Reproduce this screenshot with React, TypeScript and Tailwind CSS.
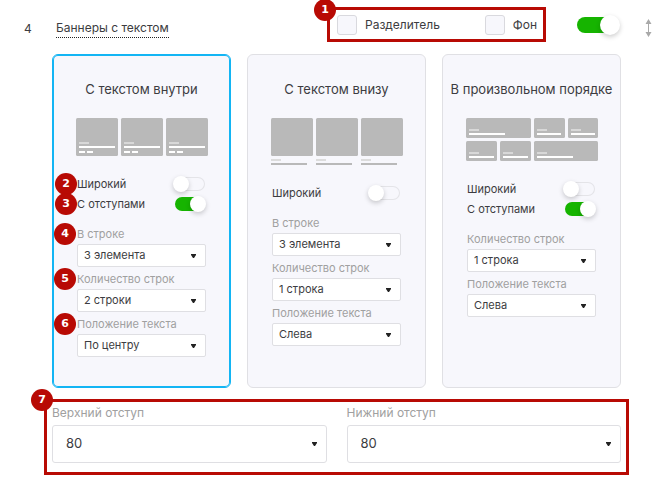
import { useId, type ReactNode } from "react";

function Badge({ n, className }: { n: number; className: string }) {
  return (
    <span
      className={`absolute z-10 flex size-[22px] items-center justify-center rounded-full bg-[#b80a04] font-['DejaVu_Sans',sans-serif] text-[11px] font-bold text-white ${className}`}
    >
      {n}
    </span>
  );
}

function CheckField({ label }: { label: string }) {
  return (
    <label className="flex items-center gap-2 text-[12px] leading-5">
      <input
        type="checkbox"
        className="size-5 appearance-none rounded-[3px] border border-[#d9d9de] bg-[#f7f7fc] checked:bg-[#16b400]"
      />
      {label}
    </label>
  );
}

function ToggleRow({ label, on, badge }: { label: string; on?: boolean; badge?: number }) {
  return (
    <label className="relative flex h-5 items-center justify-between text-[11px] whitespace-nowrap">
      {badge && <Badge n={badge} className="-left-[22px]" />}
      {label}
      <input
        type="checkbox"
        role="switch"
        defaultChecked={on}
        className="relative mr-px h-[14px] w-[30px] shrink-0 appearance-none rounded-full ring-1 ring-[#e4e4e8] ring-inset before:absolute before:-top-px before:-left-0.5 before:size-4 before:rounded-full before:bg-white before:shadow-[0_2px_5px_rgba(0,0,0,0.2)] checked:bg-[#16b400] checked:ring-0 checked:before:left-[15px]"
      />
    </label>
  );
}

function Arrow({ className }: { className: string }) {
  return (
    <svg
      viewBox="0 0 5 4"
      className={`pointer-events-none absolute h-1 w-[5px] fill-[#222] ${className}`}
      aria-hidden="true"
    >
      <path d="M0 0h5v1L3 4H2L0 1z" />
    </svg>
  );
}

function Field({ label, value, badge }: { label: string; value: string; badge?: number }) {
  const id = useId();
  return (
    <div>
      <div className="relative flex h-5 items-center">
        {badge && <Badge n={badge} className="-left-[23px]" />}
        <label htmlFor={id} className="text-[11px] whitespace-nowrap text-[#a0a0a0]">
          {label}
        </label>
      </div>
      <div className="relative">
        <select
          id={id}
          className="block h-[23px] w-full appearance-none rounded-[2px] border border-[#dfdfe3] bg-white pr-5 pl-1.5 text-[11px]"
        >
          <option>{value}</option>
        </select>
        <Arrow className="top-[10px] right-[10px]" />
      </div>
    </div>
  );
}

function OffsetField({ label }: { label: string }) {
  const id = useId();
  return (
    <div className="flex-1">
      <label htmlFor={id} className="block text-[12px] leading-5 text-[#a0a0a0]">
        {label}
      </label>
      <div className="relative mt-0.5">
        <select
          id={id}
          className="block h-[38px] w-full appearance-none rounded-[3px] border border-[#dfdfe3] bg-white px-[13px] text-[13px]"
        >
          <option>80</option>
        </select>
        <Arrow className="top-[17px] right-[10px]" />
      </div>
    </div>
  );
}

function InsideArt() {
  return (
    <svg width="132" height="38" aria-hidden="true">
      {[0, 45, 90].map((x) => (
        <g key={x}>
          <rect x={x} width="42" height="38" rx="1.5" fill="#b9b9b9" />
          <rect x={x + 3} y="24" width="10" height="2" fill="#d8d8d8" />
          <rect x={x + 3} y="28" width="36" height="2" fill="#fff" />
          <rect x={x + 3} y="33" width="6" height="2" fill="#fff" />
          <rect x={x + 11} y="33" width="6" height="2" fill="#fff" />
        </g>
      ))}
    </svg>
  );
}

function BelowArt() {
  return (
    <svg width="132" height="47" aria-hidden="true">
      {[0, 45, 90].map((x) => (
        <g key={x}>
          <rect x={x} width="42" height="38" rx="1.5" fill="#b9b9b9" />
          <rect x={x} y="41" width="10" height="2" fill="#dcdcdc" />
          <rect x={x} y="45" width="36" height="2" fill="#b9b9b9" />
        </g>
      ))}
    </svg>
  );
}

const mosaic = [
  { x: 0, y: 0, w: 65, line: 36 },
  { x: 68, y: 0, w: 31, line: 24 },
  { x: 102, y: 0, w: 30, line: 24 },
  { x: 0, y: 23, w: 31, line: 25 },
  { x: 34, y: 23, w: 31, line: 25 },
  { x: 68, y: 23, w: 64, line: 36 },
];

function MosaicArt() {
  return (
    <svg width="132" height="43" aria-hidden="true">
      {mosaic.map(({ x, y, w, line }) => (
        <g key={`${x}-${y}`}>
          <rect x={x} y={y} width={w} height="20" rx="1.5" fill="#b9b9b9" />
          <rect x={x + 3} y={y + 11} width="10" height="2" fill="#d8d8d8" />
          <rect x={x + 3} y={y + 15} width={line} height="2" fill="#fff" />
        </g>
      ))}
    </svg>
  );
}

function Card({
  title,
  art,
  toggles,
  fields,
  active,
}: {
  title: string;
  art: ReactNode;
  toggles: ReactNode;
  fields: ReactNode;
  active?: boolean;
}) {
  return (
    <section
      className={`min-w-0 rounded-md border bg-[#f7f7fc] pt-6 pb-[30px] ${
        active ? "border-[#13b5f4] ring-1 ring-[#13b5f4] ring-inset" : "border-[#e0e0e4]"
      }`}
    >
      <h3 className="text-center text-[13px] leading-5 whitespace-nowrap">{title}</h3>
      <div className="mt-[19px] flex justify-center">{art}</div>
      <div className="mt-[18px] px-6">{toggles}</div>
      <div className="mt-[10px] flex flex-col gap-0.5 px-6">{fields}</div>
    </section>
  );
}

export default function App() {
  return (
    <main className="bg-white font-[Inter,'Noto_Sans',sans-serif] text-[#3c3c41]">
      <header className="flex items-start pt-[7px] pr-4 pl-6">
        <span className="mt-3 w-8 text-[12px] leading-5">4</span>
        <button
          type="button"
          className="mt-3 border-b border-dotted border-[#222] text-[12px] leading-[18px]"
        >
          Баннеры с текстом
        </button>
        <div className="relative ml-auto flex h-[35px] w-[219px] items-center justify-between border-3 border-[#b80a04] pr-1.5 pl-[7px]">
          <Badge n={1} className="-top-[11px] -left-4" />
          <CheckField label="Разделитель" />
          <CheckField label="Фон" />
        </div>
        <input
          type="checkbox"
          role="switch"
          aria-label="Баннеры с текстом"
          defaultChecked
          className="relative mt-[10px] ml-[31px] h-4 w-[41px] appearance-none rounded-full bg-[#dddddd] before:absolute before:-top-0.5 before:left-0 before:size-5 before:rounded-full before:bg-white before:shadow-[0_2px_5px_rgba(0,0,0,0.2)] checked:bg-[#16b400] checked:before:left-[23px]"
        />
        <svg width="7" height="18" viewBox="0 0 7 18" className="mt-3 ml-[27px]" aria-hidden="true">
          <path d="M3.5 0 6.5 5H4v8h2.5l-3 5-3-5H3V5H.5z" fill="#a9a9a9" />
        </svg>
      </header>

      <div className="mt-3 mr-[47px] ml-[52px] grid grid-cols-3 gap-4">
        <Card
          active
          title="С текстом внутри"
          art={<InsideArt />}
          toggles={
            <>
              <ToggleRow label="Широкий" badge={2} />
              <ToggleRow label="С отступами" on badge={3} />
            </>
          }
          fields={
            <>
              <Field label="В строке" value="3 элемента" badge={4} />
              <Field label="Количество строк" value="2 строки" badge={5} />
              <Field label="Положение текста" value="По центру" badge={6} />
            </>
          }
        />
        <Card
          title="С текстом внизу"
          art={<BelowArt />}
          toggles={<ToggleRow label="Широкий" />}
          fields={
            <>
              <Field label="В строке" value="3 элемента" />
              <Field label="Количество строк" value="1 строка" />
              <Field label="Положение текста" value="Слева" />
            </>
          }
        />
        <Card
          title="В произвольном порядке"
          art={<MosaicArt />}
          toggles={
            <>
              <ToggleRow label="Широкий" />
              <ToggleRow label="С отступами" on />
            </>
          }
          fields={
            <>
              <Field label="Количество строк" value="1 строка" />
              <Field label="Положение текста" value="Слева" />
            </>
          }
        />
      </div>

      <div className="relative mt-[11px] mr-[39px] ml-11 flex gap-5 border-3 border-[#b80a04] px-[5px] pt-px pb-[9px]">
        <Badge n={7} className="-top-[13px] -left-4" />
        <OffsetField label="Верхний отступ" />
        <OffsetField label="Нижний отступ" />
      </div>
    </main>
  );
}
